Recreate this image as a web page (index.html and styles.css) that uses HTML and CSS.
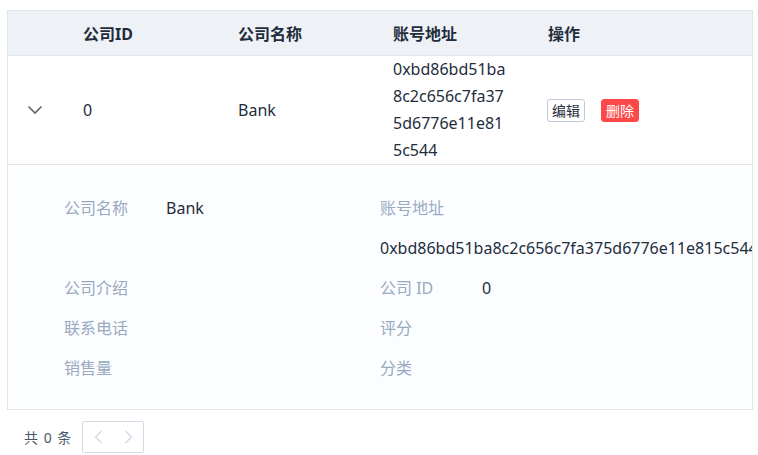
FILE: index.html
```html
<!DOCTYPE html>
<html lang="zh-CN">
<head>
<meta charset="utf-8">
<title>公司列表</title>
<link rel="stylesheet" href="styles.css">
</head>
<body>
<div class="page">
  <div class="table">
    <div class="row head">
      <div class="cell expand"></div>
      <div class="cell">公司ID</div>
      <div class="cell">公司名称</div>
      <div class="cell">账号地址</div>
      <div class="cell">操作</div>
    </div>
    <div class="row body">
      <div class="cell expand">
        <svg class="chev" width="16" height="10" viewBox="0 0 16 10"><polyline points="1.5,1.5 8,8 14.5,1.5" fill="none" stroke="#5e6672" stroke-width="1.6"/></svg>
      </div>
      <div class="cell">0</div>
      <div class="cell">Bank</div>
      <div class="cell addr">0xbd86bd51ba8c2c656c7fa375d6776e11e815c544</div>
      <div class="cell ops">
        <button class="btn">编辑</button>
        <button class="btn danger">删除</button>
      </div>
    </div>
    <div class="expanded">
      <div class="form">
        <div class="item"><span class="label">公司名称</span><span class="value">Bank</span></div>
        <div class="item"><span class="label">账号地址</span><span class="value">0xbd86bd51ba8c2c656c7fa375d6776e11e815c544</span></div>
        <div class="item"><span class="label">公司介绍</span></div>
        <div class="item"><span class="label">公司 ID</span><span class="value">0</span></div>
        <div class="item"><span class="label">联系电话</span></div>
        <div class="item"><span class="label">评分</span></div>
        <div class="item"><span class="label">销售量</span></div>
        <div class="item"><span class="label">分类</span></div>
      </div>
    </div>
  </div>
  <div class="pager">
    <span class="total">共 0 条</span>
    <div class="pbox">
      <button class="pbtn"><svg width="9" height="14" viewBox="0 0 9 14"><polyline points="7.5,1 1.5,7 7.5,13" fill="none" stroke="#d3d9e2" stroke-width="1.3"/></svg></button>
      <button class="pbtn"><svg width="9" height="14" viewBox="0 0 9 14"><polyline points="1.5,1 7.5,7 1.5,13" fill="none" stroke="#d3d9e2" stroke-width="1.3"/></svg></button>
    </div>
  </div>
</div>
</body>
</html>
```

FILE: styles.css
```css
* { box-sizing: border-box; }
html, body { margin: 0; padding: 0; background: #fff; }
body {
  font-family: "Noto Sans", "Noto Sans CJK SC", sans-serif;
  font-size: 16px;
  color: #1f2d3d;
}
.page { padding: 10px 5px 0 7px; }
.table {
  width: 746px;
  border: 1px solid #dfe6ec;
  overflow: hidden;
}
.row {
  display: grid;
  grid-template-columns: 56px 155px 155px 155px 1fr;
  border-bottom: 1px solid #dfe6ec;
}
.head {
  height: 45px;
  background: #eef1f6;
  font-weight: bold;
}
.body { height: 109px; background: #fff; }
.cell {
  display: flex;
  align-items: center;
  padding: 0 20px 0 19px;
}
.expand { padding: 0 2px 0 0; justify-content: center; }
.chev { display: block; }
.addr {
  display: block;
  align-self: center;
  line-height: 27px;
  word-break: break-all;
}
.ops { padding-left: 18px; }
.btn {
  font-family: "Noto Sans CJK SC", sans-serif;
  font-size: 14px;
  height: 23px;
  line-height: 21px;
  padding: 0 4px;
  border: 1px solid #bfcbd9;
  border-radius: 3px;
  background: #fff;
  color: #1f2d3d;
  margin: 0;
}
.btn.danger {
  margin-left: 16px;
  background: #ff4949;
  border-color: #ff4949;
  color: #fff;
}
.expanded {
  background: #fbfdff;
  padding: 23px 0 21px 56px;
}
.form {
  display: grid;
  grid-template-columns: 316px 316px;
}
.item {
  display: flex;
  flex-wrap: wrap;
  line-height: 40px;
}
.label {
  width: 102px;
  color: #99a9bf;
}
.value { white-space: nowrap; }
.pager {
  display: flex;
  align-items: center;
  margin-top: 11px;
  padding-left: 17px;
}
.total {
  font-size: 14px;
  word-spacing: 2px;
  color: #48576a;
  margin-right: 11px;
}
.pbox {
  display: flex;
  border: 1px solid #d1dbe5;
  border-radius: 2px;
  height: 32px;
}
.pbtn {
  width: 30px;
  height: 30px;
  padding: 0;
  border: 0;
  background: #fff;
  display: flex;
  align-items: center;
  justify-content: center;
}
```
